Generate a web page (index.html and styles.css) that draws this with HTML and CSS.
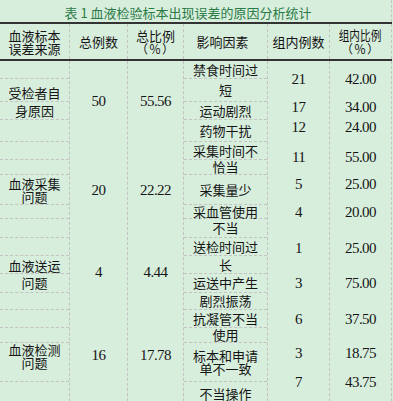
FILE: index.html
```html
<!DOCTYPE html>
<html lang="zh">
<head>
<meta charset="utf-8">
<title>表 1 血液检验标本出现误差的原因分析统计</title>
<link rel="stylesheet" href="styles.css">
</head>
<body>
<div class="page">
  <div class="title">表 1 血液检验标本出现误差的原因分析统计</div>
  <div class="head">
    <div class="hcell w1 tight"><div>血液标本<br>误差来源</div></div>
    <div class="hcell w2"><div>总例数</div></div>
    <div class="hcell w3 tight"><div>总比例<br><span class="pct">（％）</span></div></div>
    <div class="hcell w4 shift"><div>影响因素</div></div>
    <div class="hcell w5"><div>组内例数</div></div>
    <div class="hcell w6 mid"><div><span class="squeeze">组内比例</span><br><span class="pct">（％）</span></div></div>
  </div>
  <div class="body">
    <div class="col w1 layered">
      <div class="rows17">
        <div class="ln"></div><div class="ln"></div><div class="ln"></div><div class="ln"></div>
        <div class="ln"></div><div class="ln"></div><div class="ln"></div><div class="ln"></div>
        <div class="ln"></div><div class="ln"></div><div class="ln"></div><div class="ln"></div>
        <div class="ln"></div><div class="ln"></div><div class="ln"></div><div class="ln"></div>
        <div class="ln"></div>
      </div>
      <div class="groups">
        <div class="grp gA loose"><div>受检者自<br>身原因</div></div>
        <div class="grp gB tight"><div>血液采集<br>问题</div></div>
        <div class="grp gC loose"><div>血液送运<br>问题</div></div>
        <div class="grp gD tight"><div>血液检测<br>问题</div></div>
      </div>
    </div>
    <div class="col w2 groups">
      <div class="grp gA num">50</div>
      <div class="grp gB num">20</div>
      <div class="grp gC num">4</div>
      <div class="grp gD num">16</div>
    </div>
    <div class="col w3 groups">
      <div class="grp gA num">55.56</div>
      <div class="grp gB num">22.22</div>
      <div class="grp gC num">4.44</div>
      <div class="grp gD num">17.78</div>
    </div>
    <div class="col w4 rows17">
      <div class="ln">禁食时间过</div>
      <div class="ln">短</div>
      <div class="ln">运动剧烈</div>
      <div class="ln">药物干扰</div>
      <div class="ln">采集时间不</div>
      <div class="ln">恰当</div>
      <div class="ln">采集量少</div>
      <div class="ln">采血管使用</div>
      <div class="ln">不当</div>
      <div class="ln">送检时间过</div>
      <div class="ln">长</div>
      <div class="ln">运送中产生</div>
      <div class="ln">剧烈振荡</div>
      <div class="ln">抗凝管不当</div>
      <div class="ln">使用</div>
      <div class="ln tight"><div>标本和申请<br>单不一致</div></div>
      <div class="ln">不当操作</div>
    </div>
    <div class="col w5 nums">
      <div class="n num">21</div>
      <div class="n num">17</div>
      <div class="n num">12</div>
      <div class="n num">11</div>
      <div class="n num">5</div>
      <div class="n num">4</div>
      <div class="n num">1</div>
      <div class="n num">3</div>
      <div class="n num">6</div>
      <div class="n num">3</div>
      <div class="n num">7</div>
    </div>
    <div class="col w6 nums">
      <div class="n num">42.00</div>
      <div class="n num">34.00</div>
      <div class="n num">24.00</div>
      <div class="n num">55.00</div>
      <div class="n num">25.00</div>
      <div class="n num">20.00</div>
      <div class="n num">25.00</div>
      <div class="n num">75.00</div>
      <div class="n num">37.50</div>
      <div class="n num">18.75</div>
      <div class="n num">43.75</div>
    </div>
  </div>
</div>
</body>
</html>
```
FILE: styles.css
```css
html, body {
  margin: 0;
  padding: 0;
  overflow: hidden;
  background: #d8eedd;
}

body {
  font-family: "Noto Sans CJK SC", "Noto Sans", sans-serif;
  font-size: 13px;
  color: #151515;
}

.page {
  width: 392px;
}

.title {
  height: 22px;
  box-sizing: border-box;
  padding: 3px 15px 0 0;
  line-height: 19px;
  text-align: center;
  color: #2b7b47;
  border-right: 1px dashed #c3c3c3;
}

.head {
  display: flex;
  height: 39px;
  box-sizing: border-box;
  border-top: 2px solid #333;
  border-bottom: 2px solid #333;
}

.hcell {
  display: flex;
  align-items: center;
  justify-content: center;
  text-align: center;
  box-sizing: border-box;
  border-right: 1px dashed #c3c3c3;
  line-height: 16px;
}

.hcell.shift {
  padding-right: 6px;
}

.hcell.mid {
  line-height: 14px;
}

.pct {
  letter-spacing: 1px;
  font-size: 12px;
}

.squeeze {
  display: inline-block;
  transform: scaleX(0.82);
}

.w1 { width: 70px; }
.w2 { width: 58px; }
.w3 { width: 56px; }
.w4 { width: 84px; }
.w5 { width: 62px; }
.w6 { width: 62px; }

.tight { line-height: 13px; }
.loose { line-height: 17.5px; }

.body {
  display: flex;
  height: 345px;
}

.col {
  box-sizing: border-box;
  border-right: 1px dashed #c3c3c3;
}

.layered {
  display: grid;
  grid-template-columns: 100%;
  grid-template-rows: 100%;
}

.layered > .rows17,
.layered > .groups {
  grid-area: 1 / 1;
}

.rows17 {
  display: grid;
  grid-template-columns: 100%;
  grid-template-rows: 18px 23px 18px 22px 18px 15px 30px 14px 19px 18px 18px 19px 17px 18px 15px 39px 24px;
}

.ln {
  box-sizing: border-box;
  border-bottom: 1px dashed #c3c3c3;
  display: flex;
  align-items: center;
  justify-content: center;
  text-align: center;
  line-height: 14px;
  white-space: nowrap;
}

.ln.tight { line-height: 13px; }

.groups {
  display: flex;
  flex-direction: column;
}

.grp {
  display: flex;
  align-items: center;
  justify-content: center;
  text-align: center;
  flex: none;
}

.gA { height: 81px; }
.gB { height: 96px; }
.gC { height: 72px; }
.gD { height: 91px; }

.num {
  font-family: "Liberation Serif", serif;
  font-size: 15px;
  letter-spacing: -0.6px;
}

.groups .gC.num {
  padding-bottom: 4px;
  box-sizing: border-box;
}

.nums {
  display: grid;
  grid-template-columns: 100%;
  grid-template-rows: 35px 22px 18px 42px 11px 46px 25px 46px 25px 44px 14px;
}

.n {
  display: flex;
  align-items: center;
  justify-content: center;
  line-height: 16px;
}
```
